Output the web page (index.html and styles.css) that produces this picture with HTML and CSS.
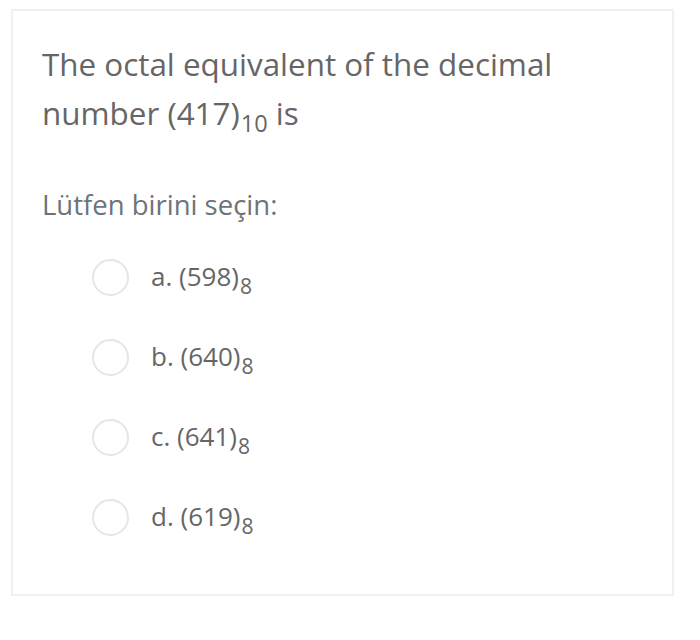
FILE: index.html
```html
<!DOCTYPE html>
<html lang="en">
<head>
<meta charset="utf-8">
<title>Question</title>
<link rel="stylesheet" href="styles.css">
</head>
<body>
<div class="card">
  <div class="qtext">The octal equivalent of the decimal number (417)<sub>10</sub> is</div>
  <div class="prompt">Lütfen birini seçin:</div>
  <div class="answers">
    <label class="option"><span class="radio"></span><span class="label">a. (598)<sub>8</sub></span></label>
    <label class="option"><span class="radio"></span><span class="label">b. (640)<sub>8</sub></span></label>
    <label class="option"><span class="radio"></span><span class="label">c. (641)<sub>8</sub></span></label>
    <label class="option"><span class="radio"></span><span class="label">d. (619)<sub>8</sub></span></label>
  </div>
</div>
</body>
</html>
```
FILE: styles.css
```css
html, body {
  margin: 0;
  padding: 0;
  background: #ffffff;
}
body {
  font-family: "Open Sans", "Liberation Sans", sans-serif;
  color: #666666;
}
.card {
  margin: 9px 0 0 11px;
  width: 663px;
  height: 587px;
  box-sizing: border-box;
  border: 2px solid #f0f0f0;
  padding: 28px 30px 0 29px;
}
.qtext {
  font-size: 31.4px;
  line-height: 49px;
  color: #666666;
  width: 540px;
}
sub {
  display: inline-block;
  font-size: 0.75em;
  line-height: 1;
  vertical-align: -0.3em;
  margin-left: 1px;
}
.prompt {
  margin-top: 48px;
  font-size: 27.5px;
  line-height: 40px;
  color: #6c737a;
}
.answers {
  margin-top: 12px;
  padding-left: 50px;
  display: flex;
  flex-direction: column;
}
.option {
  display: flex;
  align-items: center;
  height: 80px;
  gap: 22px;
}
.radio {
  width: 33px;
  height: 33px;
  border: 2px solid #e6e6e6;
  border-radius: 50%;
  flex: none;
}
.label {
  font-size: 26px;
  line-height: 36px;
  color: #666666;
}
.label sub {
  font-size: 0.81em;
  vertical-align: -0.38em;
  margin-left: 1px;
}
```
